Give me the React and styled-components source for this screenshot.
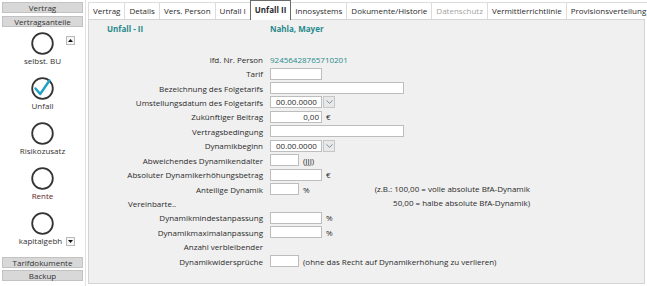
import styled, { createGlobalStyle, css } from 'styled-components'

const GlobalStyle = createGlobalStyle`
  html, body { margin: 0; padding: 0; background: #fff; }
  body {
    font-family: "Open Sans", "Noto Sans", sans-serif;
    font-size: 8px;
    color: #2b2b2b;
  }
`

const teal = '#27898b'

const Page = styled.div`
  display: flex;
  width: 647px;
  height: 286px;
`

const Sidebar = styled.aside`
  width: 86px;
  height: 286px;
  box-sizing: border-box;
  border-right: 1px solid #e1e1e1;
  padding: 2px 0 6px;
  display: flex;
  flex-direction: column;
`

const SideButton = styled.div`
  height: 11px;
  margin: 0 2px ${p => p.$gap}px 2px;
  box-sizing: border-box;
  background: #d8d8d8;
  border: 1px solid #c2c2c2;
  text-align: center;
  line-height: 9px;
  color: #333;
`

const Parts = styled.div`
  padding-top: 5px;
  display: flex;
  flex-direction: column;
`

const Part = styled.div`
  position: relative;
  height: 45px;
  display: flex;
  flex-direction: column;
  align-items: center;
`

const PartLabel = styled.div`
  height: 11px;
  line-height: 12px;
  margin-left: ${p => p.$shift || 0}px;
  color: ${p => p.$color || '#333'};
`

const ScrollArrow = styled.div`
  position: absolute;
  left: 66px;
  top: ${p => p.$top}px;
  width: 9px;
  height: 9px;
  box-sizing: border-box;
  background: #f6f6f6;
  border: 1px solid #b9b9b9;
  display: flex;
  align-items: center;
  justify-content: center;
`

const BottomButtons = styled.div`
  margin-top: auto;
`

const Main = styled.main`
  margin-left: 2px;
  width: 557px;
  display: flex;
  flex-direction: column;
`

const TabBar = styled.div`
  display: flex;
  align-items: flex-end;
  height: 19px;
  position: relative;
  z-index: 1;
`

const Tab = styled.div`
  height: 17px;
  box-sizing: border-box;
  padding: 0 4px;
  margin-right: -1px;
  border: 1px solid #dcdcdc;
  border-bottom: none;
  background: #fff;
  line-height: 16px;
  white-space: nowrap;
  color: ${p => (p.$disabled ? '#a3a3a3' : '#2b2b2b')};
  ${p => p.$active && css`
    height: 20px;
    margin-bottom: -1px;
    border: 1px solid #6b6b6b;
    border-bottom: none;
    line-height: 18px;
    font-weight: 700;
    position: relative;
    z-index: 2;
  `}
`

const Panel = styled.section`
  height: 265px;
  box-sizing: border-box;
  background: #f0f0f0;
  border: 1px solid #d4d4d4;
`

const Header = styled.div`
  display: grid;
  grid-template-columns: 181px 1fr;
  padding-top: 3px;
  line-height: 12px;
  font-weight: 700;
  color: ${teal};
`

const Title = styled.div`
  padding-left: 18px;
`

const Form = styled.div`
  margin-top: 17px;
`

const Row = styled.div`
  display: grid;
  grid-template-columns: 174px 1fr;
  grid-template-rows: 14.43px;
  column-gap: 7px;
  height: 14.43px;
`

const Label = styled.div`
  display: flex;
  align-items: center;
  justify-content: ${p => (p.$left ? 'flex-start' : 'flex-end')};
  padding-left: ${p => (p.$left ? 39 : 0)}px;
  white-space: nowrap;
`

const Value = styled.div`
  display: flex;
  align-items: center;
  gap: 4px;
  min-height: 0;
  white-space: nowrap;
  color: ${p => p.$color || 'inherit'};
`

const Field = styled.div`
  width: ${p => p.$w}px;
  height: 12px;
  box-sizing: border-box;
  background: #fff;
  border: 1px solid #bdbdbd;
  padding: 0 ${p => (p.$right ? 2 : 5)}px;
  line-height: 10px;
  text-align: ${p => (p.$right ? 'right' : 'left')};
`

const DateWrap = styled.div`
  display: flex;
  gap: 1px;
`

const DropButton = styled.div`
  width: 12px;
  height: 12px;
  box-sizing: border-box;
  background: #e8e8e8;
  border: 1px solid #c6c6c6;
  display: flex;
  align-items: center;
  justify-content: center;
`

const Hint = styled.div`
  align-self: flex-start;
  margin-left: 61px;
  line-height: 14.43px;
  text-align: right;
`

const Ring = ({ checked }) => (
  <svg width="23" height="23" viewBox="0 0 23 23">
    <circle cx="11.5" cy="11.5" r="10.3" fill="#fff" stroke="#343434" strokeWidth="1.8" />
    {checked && (
      <path d="M4.5 11.5 L9.2 17 L18.5 3.5" fill="none" stroke="#1e9fc6" strokeWidth="2.4" strokeLinecap="round" strokeLinejoin="round" />
    )}
  </svg>
)

const Triangle = ({ down }) => (
  <svg width="5" height="3" viewBox="0 0 5 3">
    <path d={down ? 'M0 0 H5 L2.5 3 Z' : 'M0 3 H5 L2.5 0 Z'} fill="#111" />
  </svg>
)

const DateField = () => (
  <DateWrap>
    <Field $w={52}>00.00.0000</Field>
    <DropButton>
      <svg width="7" height="4" viewBox="0 0 7 4">
        <path d="M0.5 0.5 L3.5 3.3 L6.5 0.5" fill="none" stroke="#7d8ca0" strokeWidth="1" />
      </svg>
    </DropButton>
  </DateWrap>
)

const parts = [
  { name: 'selbst. BU', arrow: 'up' },
  { name: 'Unfall', checked: true },
  { name: 'Risikozusatz' },
  { name: 'Rente', color: '#5e2424' },
  { name: 'kapitalgebh', arrow: 'down', shift: -4 },
]

const tabs = [
  'Vertrag', 'Details', 'Vers. Person', 'Unfall I', 'Unfall II', 'Innosystems',
  'Dokumente/Historie', 'Datenschutz', 'Vermittlerrichtlinie', 'Provisionsverteilung',
]

export default function App() {
  return (
    <Page>
      <GlobalStyle />
      <Sidebar>
        <SideButton $gap={3}>Vertrag</SideButton>
        <SideButton $gap={0}>Vertragsanteile</SideButton>
        <Parts>
          {parts.map(p => (
            <Part key={p.name}>
              <Ring checked={p.checked} />
              <PartLabel $color={p.color} $shift={p.shift}>{p.name}</PartLabel>
              {p.arrow === 'up' && <ScrollArrow $top={4}><Triangle /></ScrollArrow>}
              {p.arrow === 'down' && <ScrollArrow $top={25}><Triangle down /></ScrollArrow>}
            </Part>
          ))}
        </Parts>
        <BottomButtons>
          <SideButton $gap={2}>Tarifdokumente</SideButton>
          <SideButton $gap={0}>Backup</SideButton>
        </BottomButtons>
      </Sidebar>

      <Main>
        <TabBar>
          {tabs.map(t => (
            <Tab key={t} $active={t === 'Unfall II'} $disabled={t === 'Datenschutz'}>{t}</Tab>
          ))}
        </TabBar>
        <Panel>
          <Header>
            <Title>Unfall - II</Title>
            <div>Nahla, Mayer</div>
          </Header>
          <Form>
            <Row>
              <Label>lfd. Nr. Person</Label>
              <Value $color={teal}>92456428765710201</Value>
            </Row>
            <Row>
              <Label>Tarif</Label>
              <Value><Field $w={52} /></Value>
            </Row>
            <Row>
              <Label>Bezeichnung des Folgetarifs</Label>
              <Value><Field $w={134} /></Value>
            </Row>
            <Row>
              <Label>Umstellungsdatum des Folgetarifs</Label>
              <Value><DateField /></Value>
            </Row>
            <Row>
              <Label>Zukünftiger Beitrag</Label>
              <Value><Field $w={52} $right>0,00</Field>€</Value>
            </Row>
            <Row>
              <Label>Vertragsbedingung</Label>
              <Value><Field $w={134} /></Value>
            </Row>
            <Row>
              <Label>Dynamikbeginn</Label>
              <Value><DateField /></Value>
            </Row>
            <Row>
              <Label>Abweichendes Dynamikendalter</Label>
              <Value><Field $w={29} />(JJJ)</Value>
            </Row>
            <Row>
              <Label>Absoluter Dynamikerhöhungsbetrag</Label>
              <Value><Field $w={52} />€</Value>
            </Row>
            <Row>
              <Label>Anteilige Dynamik</Label>
              <Value>
                <Field $w={29} />%
                <Hint>
                  (z.B.: 100,00 = volle absolute BfA-Dynamik<br />
                  50,00 = halbe absolute BfA-Dynamik)
                </Hint>
              </Value>
            </Row>
            <Row>
              <Label $left>Vereinbarte..</Label>
              <Value />
            </Row>
            <Row>
              <Label>Dynamikmindestanpassung</Label>
              <Value><Field $w={52} />%</Value>
            </Row>
            <Row>
              <Label>Dynamikmaximalanpassung</Label>
              <Value><Field $w={52} />%</Value>
            </Row>
            <Row>
              <Label>Anzahl verbleibender</Label>
              <Value />
            </Row>
            <Row>
              <Label>Dynamikwidersprüche</Label>
              <Value><Field $w={29} />(ohne das Recht auf Dynamikerhöhung zu verlieren)</Value>
            </Row>
          </Form>
        </Panel>
      </Main>
    </Page>
  )
}
